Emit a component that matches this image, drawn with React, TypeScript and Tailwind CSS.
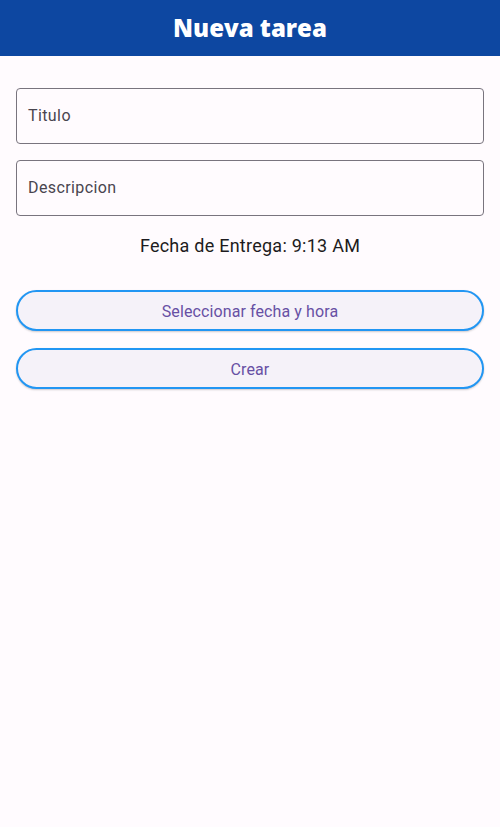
import React from "react";

export default function App() {
  return (
    <div className="min-h-[827px] w-full bg-[#fffbfe]" style={{ fontFamily: "Roboto, 'Noto Sans', sans-serif" }}>
      <header className="flex h-[56px] items-center justify-center bg-[#0d47a1]">
        <h1 className="text-[24px] font-extrabold tracking-[0px] text-white" style={{ fontFamily: "'Open Sans', Lato, sans-serif" }}>
          Nueva tarea
        </h1>
      </header>
      <main className="flex flex-col px-4 pt-8">
        <div className="flex h-[56px] items-center rounded-[4px] border border-[#79747e] px-[11px] text-[16px] tracking-[0.4px] text-[#49454f]">
          Titulo
        </div>
        <div className="mt-4 flex h-[56px] items-center rounded-[4px] border border-[#79747e] px-[11px] text-[16px] tracking-[0.4px] text-[#49454f]">
          Descripcion
        </div>
        <p className="mt-[18px] text-center text-[18px] leading-[24px] tracking-[0.25px] text-[#1d1b20]">Fecha de Entrega: 9:13 AM</p>
        <button className="mt-[32px] flex h-[41px] items-center justify-center rounded-full border-2 border-[#2196f3] bg-[#f5f2f9] pt-[2px] text-[16px] tracking-[0.1px] text-[#6750a4] shadow-[0_1px_2px_rgba(0,0,0,0.2)]">
          Seleccionar fecha y hora
        </button>
        <button className="mt-[17px] flex h-[41px] items-center justify-center rounded-full border-2 border-[#2196f3] bg-[#f5f2f9] pt-[2px] text-[16px] tracking-[0.1px] text-[#6750a4] shadow-[0_1px_2px_rgba(0,0,0,0.2)]">
          Crear
        </button>
      </main>
    </div>
  );
}
